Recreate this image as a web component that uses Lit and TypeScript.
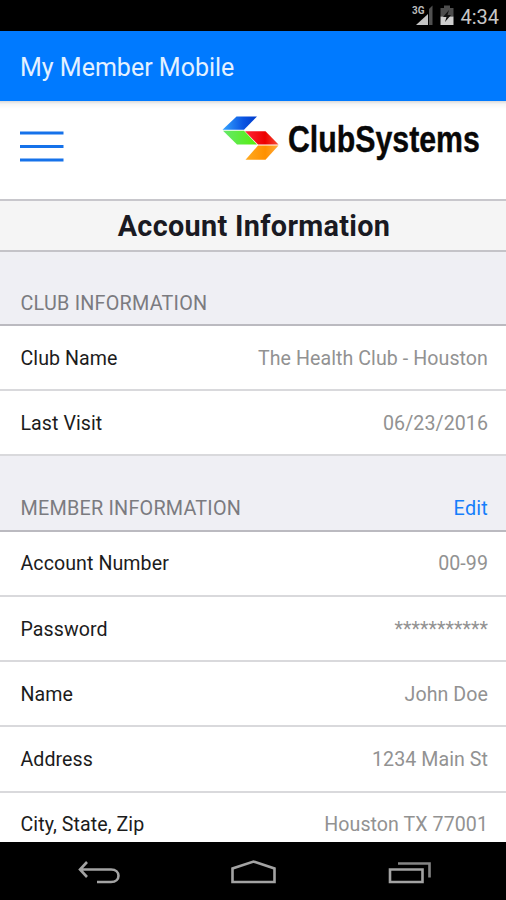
import { LitElement, html, css } from "lit";
import { customElement, property } from "lit/decorators.js";

@customElement("info-row")
class InfoRow extends LitElement {
  @property() label = "";
  @property() value = "";
  static styles = css`
    :host { display: flex; justify-content: space-between; align-items: center; box-sizing: border-box;
      height: 65.2px; padding: 1px 18px 0 20.5px; background: #fff; border-bottom: 2px solid #d9d9dc;
      font-size: 19.6px; letter-spacing: 0.07px; color: #1c1c1c; }
    .value { color: #929292; }
  `;
  render() {
    return html`<span>${this.label}</span><span class="value">${this.value}</span>`;
  }
}

@customElement("app-root")
class AppRoot extends LitElement {
  static styles = css`
    :host { display: flex; flex-direction: column; height: 900px; width: 506px; overflow: hidden;
      font-family: Roboto, "Liberation Sans", sans-serif; background: #efeff4; }
    svg { display: block; overflow: visible; }
    .status { flex: none; height: 31px; background: #000; display: flex; justify-content: flex-end; }
    .bar { flex: none; height: 70px; box-sizing: border-box; background: #007aff; color: #e4f1ff;
      padding: 2px 20px 0; display: flex; align-items: center; font-size: 25px; }
    .head { flex: none; height: 98px; box-sizing: border-box; display: flex; justify-content: space-between;
      padding-left: 20px; background: linear-gradient(#d9d9d9, #f5f5f5 3px, #fff 8px); }
    .title { flex: none; height: 53px; box-sizing: border-box; border-top: 2px solid #c8c7cc;
      border-bottom: 2px solid #c4c3c8; background: #f5f5f5; display: flex; align-items: center;
      justify-content: center; padding-left: 2px; font-size: 28.8px; font-weight: 700; letter-spacing: 0.32px; color: #1a1a22; }
    .section { flex: none; box-sizing: border-box; height: 74px; padding: 0 18px 8.5px 20.5px; display: flex;
      align-items: flex-end; justify-content: space-between; border-bottom: 2px solid #bbbac0;
      font-size: 19.8px; line-height: 24px; color: #7b7b80; background: #efeff4; letter-spacing: 0.22px; }
    .section.member { height: 75.5px; }
    .edit { color: #157efb; }
    .list { flex: 1; min-height: 0; overflow: hidden; display: flex; flex-direction: column; }
    info-row { flex: none; }
    .nav { flex: none; height: 58px; background: #000; }
  `;
  render() {
    return html`
      <div class="status">
        <svg width="106" height="31" viewBox="0 0 106 31">
          <text x="12" y="14" font-size="10" font-weight="700" fill="#bbb" textLength="12.500" lengthAdjust="spacingAndGlyphs">3G</text>
          <path d="M16 25 L28 14 V25Z" fill="#c4c4c4" />
          <path d="M29 9 L32.500 5.500 V25 H29Z" fill="#505050" />
          <path d="M40.500 8 H44 V5.500 H50 V8 H53.500 V16.500 H40.500Z" fill="#4d4d4d" />
          <path d="M40.500 16.500 H53.500 V25 H40.500Z" fill="#cfcfcf" />
          <path d="M49 10 L43 17 H46.500 L45 22 L51 15 H47.500Z" fill="#111" />
          <text x="60.500" y="23.500" font-size="20" fill="#c8c8c8" textLength="38.500">4:34</text>
        </svg>
      </div>
      <div class="bar">My Member Mobile</div>
      <div class="head">
        <svg width="44" height="98" viewBox="0 0 44 98" stroke="#1672ea" stroke-width="3">
          <path d="M0 32H43.500M0 45.500H43.500M0 59H43.500" />
        </svg>
        <svg width="296" height="98" viewBox="210 101 296 98">
          <defs>
            <linearGradient id="b" x1="0" x2="1"><stop offset="0" stop-color="#35a4ff" /><stop offset=".6" stop-color="#0b55e2" /><stop offset="1" stop-color="#003bcb" /></linearGradient>
            <linearGradient id="g" x1="0" x2="1"><stop offset="0" stop-color="#65e86b" /><stop offset="1" stop-color="#56ef0b" /></linearGradient>
            <linearGradient id="r" x1="0" x2="1"><stop offset="0" stop-color="#ff2638" /><stop offset=".6" stop-color="#ec0000" /><stop offset="1" stop-color="#f64c35" /></linearGradient>
            <linearGradient id="o" x1="0" x2="1"><stop offset="0" stop-color="#ffab22" /><stop offset=".6" stop-color="#ff9000" /><stop offset="1" stop-color="#ffab3c" /></linearGradient>
          </defs>
          <path d="M236.500 116.500H257L244 129.800H222.500Z" fill="url(#b)" />
          <path d="M223 130.800H244L257 144.500H237Z" fill="url(#g)" />
          <path d="M245 131.200H265.500L278.500 144.600H258Z" fill="url(#r)" />
          <path d="M258 145.600H278.500L265.500 159.800H245.500Z" fill="url(#o)" />
          <text transform="translate(288 151.500) scale(.83 1)" font-family="Liberation Sans, sans-serif" font-weight="700"
            font-size="36.500" fill="#080808" stroke="#080808" stroke-width=".4">ClubSystems</text>
        </svg>
      </div>
      <div class="title">Account Information</div>
      <div class="list">
        <div class="section">CLUB INFORMATION</div>
        <info-row label="Club Name" value="The Health Club - Houston"></info-row>
        <info-row label="Last Visit" value="06/23/2016"></info-row>
        <div class="section member"><span>MEMBER INFORMATION</span><span class="edit">Edit</span></div>
        <info-row label="Account Number" value="00-99"></info-row>
        <info-row label="Password" value="***********"></info-row>
        <info-row label="Name" value="John Doe"></info-row>
        <info-row label="Address" value="1234 Main St"></info-row>
        <info-row label="City, State, Zip" value="Houston TX 77001"></info-row>
      </div>
      <div class="nav">
        <svg width="506" height="58" viewBox="0 842 506 58" fill="none" stroke="#a3a3a3" stroke-width="2.600">
          <path d="M80 869.500H111C121 869.500 121 882 111 882H97M87 862L80 869.500L87 877" />
          <path d="M232.500 882V868.500L253.500 861.500L274.500 868.500V882Z" />
          <path d="M390 869.500H422.500V882H390Z" />
          <path d="M398 863.500H429.500V877.500" stroke="#858585" />
        </svg>
      </div>`;
  }
}
